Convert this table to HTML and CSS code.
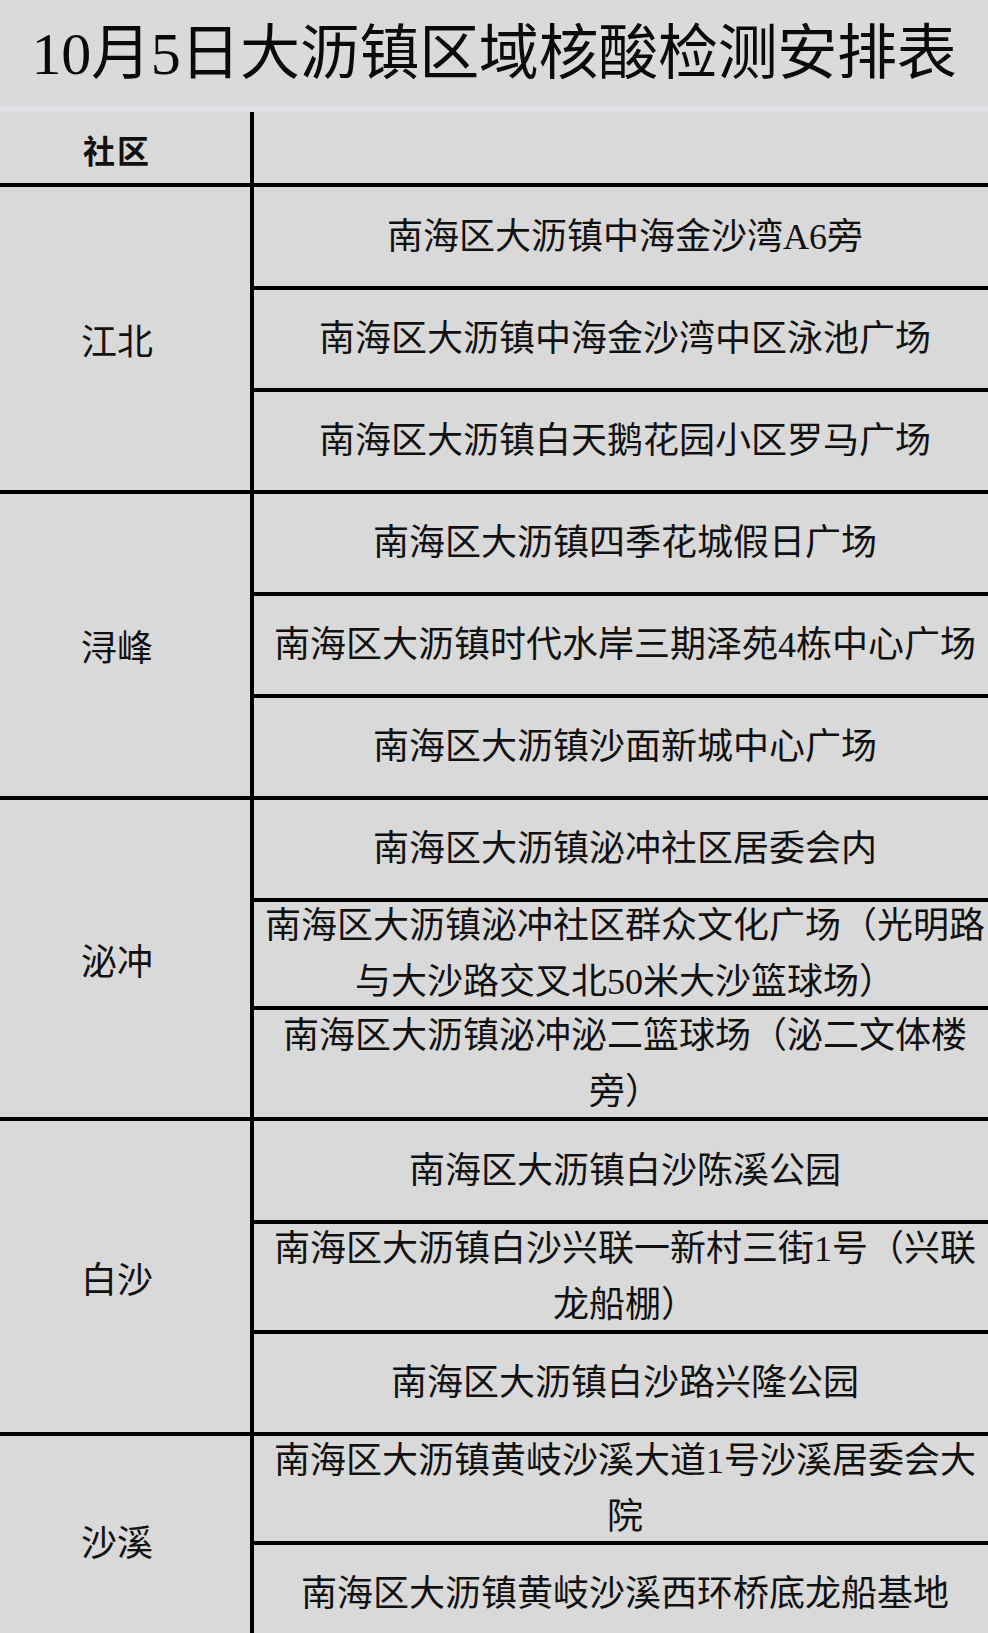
FILE: index.html
```html
<!DOCTYPE html>
<html lang="zh-CN">
<head>
<meta charset="utf-8">
<title>10月5日大沥镇区域核酸检测安排表</title>
<link rel="stylesheet" href="styles.css">
</head>
<body>
<div class="sheet">
  <div class="title">10月5日大沥镇区域核酸检测安排表</div>
  <div class="band"></div>

  <div class="row header">
    <div class="left">社区</div>
    <div class="right"></div>
  </div>

  <div class="row group">
    <div class="left">江北</div>
    <div class="right">
      <div class="item h99"><span class="t">南海区大沥镇中海金沙湾A6旁</span></div>
      <div class="item"><span class="t">南海区大沥镇中海金沙湾中区泳池广场</span></div>
      <div class="item"><span class="t">南海区大沥镇白天鹅花园小区罗马广场</span></div>
    </div>
  </div>

  <div class="row group">
    <div class="left">浔峰</div>
    <div class="right">
      <div class="item"><span class="t">南海区大沥镇四季花城假日广场</span></div>
      <div class="item"><span class="t">南海区大沥镇时代水岸三期泽苑4栋中心广场</span></div>
      <div class="item"><span class="t">南海区大沥镇沙面新城中心广场</span></div>
    </div>
  </div>

  <div class="row group">
    <div class="left">泌冲</div>
    <div class="right">
      <div class="item"><span class="t">南海区大沥镇泌冲社区居委会内</span></div>
      <div class="item h104"><span class="t">南海区大沥镇泌冲社区群众文化广场（光明路<br>与大沙路交叉北50米大沙篮球场）</span></div>
      <div class="item h107"><span class="t">南海区大沥镇泌冲泌二篮球场（泌二文体楼<br>旁）</span></div>
    </div>
  </div>

  <div class="row group">
    <div class="left">白沙</div>
    <div class="right">
      <div class="item h99"><span class="t">南海区大沥镇白沙陈溪公园</span></div>
      <div class="item h106"><span class="t">南海区大沥镇白沙兴联一新村三街1号（兴联<br>龙船棚）</span></div>
      <div class="item"><span class="t">南海区大沥镇白沙路兴隆公园</span></div>
    </div>
  </div>

  <div class="row group">
    <div class="left">沙溪</div>
    <div class="right">
      <div class="item h105"><span class="t">南海区大沥镇黄岐沙溪大道1号沙溪居委会大<br>院</span></div>
      <div class="item"><span class="t">南海区大沥镇黄岐沙溪西环桥底龙船基地</span></div>
    </div>
  </div>
</div>
</body>
</html>
```

FILE: styles.css
```css
* {
  box-sizing: border-box;
}

html, body {
  margin: 0;
  padding: 0;
}

body {
  background: #d9d9d9;
  overflow: hidden;
  font-family: "Liberation Serif", "Noto Sans CJK SC", serif;
  color: #111;
}

.sheet {
  width: 988px;
}

.title {
  height: 106px;
  padding-bottom: 12px;
  display: flex;
  align-items: center;
  justify-content: center;
  font-size: 60px;
  letter-spacing: -0.3px;
  background: #dadada;
  color: #0a0a0a;
  white-space: nowrap;
}

.band {
  height: 6px;
  background: #dfdfe3;
}

.row {
  display: flex;
}

.left {
  width: 250px;
  flex: none;
  padding-right: 16px;
  display: flex;
  align-items: center;
  justify-content: center;
  font-size: 36px;
}

.right {
  flex: 1;
  border-left: 4px solid #000;
  display: flex;
  flex-direction: column;
}

.header {
  height: 71px;
}

.header .left {
  font-weight: bold;
  font-size: 32px;
  letter-spacing: 2px;
  padding-top: 2px;
}

.group {
  border-top: 4px solid #000;
}

.item {
  box-sizing: content-box;
  height: 98px;
  flex: none;
  display: flex;
  align-items: center;
  justify-content: center;
  padding-left: 8px;
  font-size: 36px;
  line-height: 56px;
  white-space: nowrap;
  text-align: center;
}

.item + .item {
  border-top: 4px solid #000;
}

.t {
  display: block;
}

.h99 { height: 99px; }
.h104 { height: 104px; }
.h105 { height: 105px; }
.h106 { height: 106px; }
.h107 { height: 107px; }
```
